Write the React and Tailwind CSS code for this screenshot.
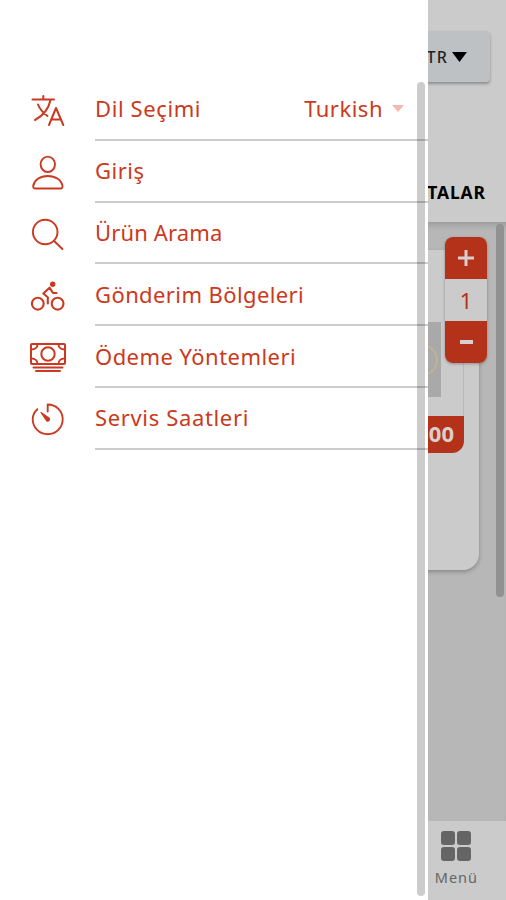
import React from 'react';

const TranslateIcon = () => (
    <svg className="w-9 h-9" viewBox="0 0 36 36" fill="none" stroke="currentColor" strokeWidth="2" strokeLinecap="round" strokeLinejoin="round">
        <path d="M2.500 6.500h21.500M13.300 3v3.500M8 11.500c2 5 5 8.500 9.500 11.500M20.500 7c-1.700 8-7 15.500-15.500 20M19 32l7-17 7.300 17M21.300 26.500h9.600" />
    </svg>
);

const UserIcon = () => (
    <svg className="w-9 h-9" viewBox="0 0 36 36" fill="none" stroke="currentColor" strokeWidth="1.900" strokeLinejoin="round">
        <ellipse cx="17.800" cy="9.300" rx="7.200" ry="7.700" />
        <path d="M5.300 33.500h25c1.600 0 2.400-1 2.200-2.500C31.500 25 25.800 21 17.800 21S4.200 25 3.200 31C3 32.500 3.800 33.500 5.300 33.500z" />
    </svg>
);

const SearchIcon = () => (
    <svg className="w-9 h-9" viewBox="0 0 36 36" fill="none" stroke="currentColor" strokeWidth="1.900" strokeLinecap="round">
        <circle cx="15.200" cy="15" r="12.300" />
        <path d="M24.200 24l8.200 8" />
    </svg>
);

const BikeIcon = () => (
    <svg className="w-9 h-9" viewBox="0 0 36 36" fill="none" stroke="currentColor" strokeWidth="2.100" strokeLinecap="round" strokeLinejoin="round">
        <circle cx="7.800" cy="25.700" r="5.900" />
        <circle cx="27.600" cy="25.700" r="5.900" />
        <circle cx="22.700" cy="6.200" r="2.700" fill="currentColor" stroke="none" />
        <path d="M17.800 25.500v-6.300l-4.500-3.700 6.200-5.800 3.500 5.300H26.500" />
    </svg>
);

const CashIcon = () => (
    <svg className="w-9 h-9" viewBox="0 0 36 36" fill="none" stroke="currentColor" strokeWidth="2" strokeLinejoin="round" strokeLinecap="round">
        <rect x="1" y="4" width="34" height="20" rx="1" />
        <circle cx="18" cy="14" r="6.700" />
        <path d="M7.500 4.200c0 3.200-2.500 5.300-6 5.300M28.500 4.200c0 3.200 2.500 5.300 6 5.300M7.500 23.800c0-3.200-2.500-5.300-6-5.300M28.500 23.800c0-3.200 2.500-5.300 6-5.300M3.500 27.500h29M6 31h24" />
    </svg>
);

const TimerIcon = () => (
    <svg className="w-9 h-9" viewBox="0 0 36 36" fill="none" stroke="currentColor" strokeWidth="1.900" strokeLinecap="round" strokeLinejoin="round">
        <path d="M17.700 9.500V2.500c8.500 0 15 6.600 15 14.800s-6.700 14.900-15 14.900-15-6.600-15-14.900c0-4.200 1.800-7.600 4.700-10.100" />
        <path d="M11 10.500l8.300 5.800a1.900 1.900 0 0 1-2.500 2.600z" fill="currentColor" strokeWidth="1.200" />
    </svg>
);

const menuItems = [
    { label: 'Dil Seçimi', icon: TranslateIcon, value: 'Turkish', spacing: 'tracking-[0.6px]' },
    { label: 'Giriş', icon: UserIcon, spacing: 'tracking-[0.5px]' },
    { label: 'Ürün Arama', icon: SearchIcon, spacing: 'tracking-[0.15px]' },
    { label: 'Gönderim Bölgeleri', icon: BikeIcon, spacing: 'tracking-[0.4px]' },
    { label: 'Ödeme Yöntemleri', icon: CashIcon, spacing: 'tracking-[0.45px]' },
    { label: 'Servis Saatleri', icon: TimerIcon, spacing: 'tracking-[0.65px]' },
];

const MenuRow = ({ item }) => {
    const Icon = item.icon;

    return (
        <li className="flex h-[61.8px] pl-[30px] text-[#cb3920]">
            <div className="w-[65px] shrink-0 pt-[14px]">
                <Icon />
            </div>
            <div className="flex-1 flex items-center justify-between border-b-2 border-black/20 pr-[24px] text-[22px] whitespace-nowrap">
                <span className={item.spacing}>{item.label}</span>
                {item.value && (
                    <span className="flex items-center gap-[9px] tracking-[0.5px]">
                        {item.value}
                        <svg className="w-3 h-[7px]" viewBox="0 0 12 7" fill="#f3b9b3"><path d="M0 0h12L6 7z" /></svg>
                    </span>
                )}
            </div>
        </li>
    );
};

const Drawer = () => (
    <nav className="absolute inset-y-0 left-0 w-[428px] bg-white pt-[79px]">
        <ul>
            {menuItems.map(item => <MenuRow key={item.label} item={item} />)}
        </ul>
        {/* Scroll thumb */}
        <div className="absolute left-[417px] top-[82px] w-[8px] h-[814px] rounded-full bg-black/20"></div>
    </nav>
);

const Stepper = () => (
    <div className="absolute right-[-8px] top-[-13px] w-[42px] h-[126px] rounded-[8px] overflow-hidden shadow-[0_1px_3px_rgba(0,0,0,0.3)] flex flex-col bg-[#cbcbcb]">
        <button className="h-[42px] bg-[#b43219] flex items-center justify-center">
            <svg className="w-4 h-4" viewBox="0 0 16 16" stroke="#d8d0ce" strokeWidth="3"><path d="M0 8h16M8 0v16" /></svg>
        </button>
        <span className="flex-1 flex items-center justify-center text-[22px] text-[#b43219]">1</span>
        <button className="h-[42px] bg-[#b43219] flex items-center justify-center">
            <span className="w-[13px] h-[4px] bg-[#d8d0ce]"></span>
        </button>
    </div>
);

const App = () => (
    <div className="relative w-[506px] h-[900px] overflow-hidden bg-[#cbcbcb] font-['Noto_Sans',sans-serif]">
        <div className="flex flex-col h-full">
            <header className="h-[163px] pt-[31px] pr-4 flex justify-end items-start">
                <button className="w-[110px] h-[51px] pr-[23px] rounded-[4px] bg-[#bec1c3] shadow-[0_2px_3px_rgba(0,0,0,0.3)] flex items-center justify-end gap-[4px] text-[16px] font-medium tracking-[1.2px] text-[#222]">
                    TR
                    <svg className="w-[15px] h-[10px]" viewBox="0 0 15 10" fill="#000"><path d="M0 0h15L7.500 10z" /></svg>
                </button>
            </header>
            <div className="h-[59px] pr-[20px] flex items-center justify-end text-[17.500px] font-bold tracking-[0.9px] text-black">
                TALAR
            </div>

            <main className="relative flex-1 bg-[#b7b7b7] pt-[28px] pr-[27px] flex items-start justify-end shadow-[inset_0_7px_7px_-5px_rgba(0,0,0,0.2)]">
                <article className="relative w-[200px] h-[320px] rounded-[16px] bg-[#cbcbcb] pr-[15px] shadow-[0_2px_4px_rgba(0,0,0,0.25)]">
                    <div className="h-[203px] pt-[72px] pr-[22px] flex justify-end items-start border-r border-[#b9b9b9] rounded-br-[12px]">
                        <div className="w-[80px] h-[75px] bg-[#a9a9a9] flex items-center justify-end pr-[3px]">
                            <div className="w-8 h-8 rounded-full border-2 border-[#bbb595]"></div>
                        </div>
                    </div>
                    <div className="-mt-[37px] ml-auto w-[70px] h-[37px] pr-[10px] pb-[3px] rounded-br-[12px] bg-[#b43219] flex items-center justify-end text-[22px] font-bold text-[#d8d0ce]">
                        00
                    </div>
                    <Stepper />
                </article>
                <div className="absolute left-[496px] top-[2px] w-[8px] h-[373px] rounded-full bg-[#919191]"></div>
            </main>

            <footer className="h-[79px] pr-[28px] pt-[10px] flex flex-col items-end">
                <div className="grid grid-cols-2 gap-[2px] mr-[7px]">
                    {[0, 1, 2, 3].map(i => <span key={i} className="w-[14px] h-[14px] rounded-[3px] bg-[#656565]"></span>)}
                </div>
                <span className="mt-[5px] text-[14.500px] leading-[22px] tracking-[1px] text-[#666]">Menü</span>
            </footer>
        </div>

        <Drawer />
    </div>
);

export default App;
